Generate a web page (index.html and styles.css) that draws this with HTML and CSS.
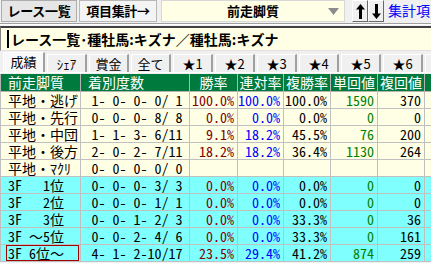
FILE: index.html
```html
<!DOCTYPE html>
<html lang="ja">
<head>
    <meta charset="UTF-8">
    <title>集計</title>
    <link rel="stylesheet" href="styles.css">
</head>
<body>
<div id="ventana">
    <!-- barra superior -->
    <div class="barra">
        <button class="btn">レース一覧</button>
        <button class="btn btn-activo">項目集計→</button>
        <div class="combo">
            <span>前走脚質</span>
            <svg class="triangulo" width="11" height="7" viewBox="0 0 11 7"><path d="M0 0H11L5.5 7Z" fill="#8c8c8c"/></svg>
        </div>
        <div class="flechas">
            <button class="flecha"><svg width="9" height="15" viewBox="0 0 9 15"><path d="M4.5 0L9 5.5H6V15H3V5.5H0Z" fill="#000"/></svg></button>
            <button class="flecha"><svg width="9" height="15" viewBox="0 0 9 15"><path d="M4.5 15L9 9.5H6V0H3V9.5H0Z" fill="#000"/></svg></button>
        </div>
        <span class="enlace">集計項目</span>
    </div>

    <div class="titulo">
        <span class="cursor"></span>
        <span>レース一覧･種牡馬:キズナ／種牡馬:キズナ</span>
    </div>

    <!-- pestañas -->
    <div class="pestanas">
        <div class="pestana activa">成績</div>
        <div class="pestana">ｼｪｱ</div>
        <div class="pestana">賞金</div>
        <div class="pestana">全て</div>
        <div class="pestana">★1</div>
        <div class="pestana">★2</div>
        <div class="pestana">★3</div>
        <div class="pestana">★4</div>
        <div class="pestana">★5</div>
        <div class="pestana">★6</div>
        <div class="pestana">★7</div>
    </div>

    <table class="tabla">
        <colgroup>
            <col style="width:80px"><col style="width:109px"><col style="width:48px"><col style="width:46px">
            <col style="width:47px"><col style="width:47px"><col style="width:47px"><col style="width:47px">
        </colgroup>
        <thead>
            <tr><th class="izq">前走脚質</th><th class="izq">着別度数</th><th>勝率</th><th>連対率</th><th>複勝率</th><th>単回値</th><th>複回値</th><th class="izq">単勝</th></tr>
        </thead>
        <tbody id="cuerpo"></tbody>
    </table>
</div>

<script>
    // Datos de la tabla
    const filas = [
        ['平地・逃げ', ' 1- 0- 0- 0/ 1', '100.0%', '100.0%', '100.0%', '1590', '370', 'p'],
        ['平地・先行', ' 0- 0- 0- 8/ 8', '0.0%', '0.0%', '0.0%', '0', '0', 'p'],
        ['平地・中団', ' 1- 1- 3- 6/11', '9.1%', '18.2%', '45.5%', '76', '200', 'p'],
        ['平地・後方', ' 2- 0- 2- 7/11', '18.2%', '18.2%', '36.4%', '1130', '264', 'p'],
        ['平地・ﾏｸﾘ', ' 0- 0- 0- 0/ 0', '', '', '', '', '', 'p'],
        ['3F   1位', ' 0- 0- 0- 3/ 3', '0.0%', '0.0%', '0.0%', '0', '0', 'c'],
        ['3F   2位', ' 0- 0- 0- 1/ 1', '0.0%', '0.0%', '0.0%', '0', '0', 'c'],
        ['3F   3位', ' 0- 0- 1- 2/ 3', '0.0%', '0.0%', '33.3%', '0', '36', 'c'],
        ['3F ～5位', ' 0- 0- 2- 4/ 6', '0.0%', '0.0%', '33.3%', '0', '161', 'c'],
        ['3F 6位～', ' 4- 1- 2-10/17', '23.5%', '29.4%', '41.2%', '874', '259', 'c']
    ];
    const cuerpo = document.getElementById('cuerpo');
    filas.forEach((f, i) => {
        const tr = document.createElement('tr');
        tr.className = f[7] === 'c' ? 'fila-celeste' : 'fila-amarilla';
        const nombre = i === filas.length - 1
            ? '<td class="nombre"><span class="foco">' + f[0] + '</span></td>'
            : '<td class="nombre"><span>' + f[0] + '</span></td>';
        tr.innerHTML = nombre +
            '<td class="conteo">' + f[1] + '</td>' +
            '<td class="num rojo">' + f[2] + '</td>' +
            '<td class="num azul">' + f[3] + '</td>' +
            '<td class="num">' + f[4] + '</td>' +
            '<td class="num verde">' + f[5] + '</td>' +
            '<td class="num">' + f[6] + '</td>' +
            '<td class="num"></td>';
        cuerpo.appendChild(tr);
    });
</script>
</body>
</html>
```

FILE: styles.css
```css
body {
    margin: 0;
    background-color: #f0f0f0;
    font-family: "Noto Sans CJK JP", sans-serif;
}
#ventana {
    width: 431px;
    height: 263px;
    overflow: hidden;
}
.barra {
    display: grid;
    grid-template-columns: 76px 78px 186px 37px 60px;
    column-gap: 2px;
    height: 23px;
    padding-left: 1px;
    border-bottom: 1px solid #a0a0a0;
    box-shadow: 0 1px 0 #fff;
}
.btn {
    height: 22px;
    padding: 0;
    margin: 0;
    font-family: "Noto Sans CJK JP", sans-serif;
    font-size: 13px;
    font-weight: bold;
    line-height: 20px;
    letter-spacing: -0.3px;
    color: #000;
    background-color: #e6e6e6;
    border: 1px solid #adadad;
    white-space: nowrap;
}
.btn-activo {
    background-color: #f4f4f4;
    border-color: #b8b8b8;
}
.combo {
    margin-left: 2px;
    height: 22px;
    box-sizing: border-box;
    background-color: #ffffe6;
    border: 1px solid #d8d8d8;
    position: relative;
    font-size: 13px;
    font-weight: bold;
    line-height: 20px;
    text-align: center;
}
.triangulo {
    position: absolute;
    right: 5px;
    top: 7px;
}
.flechas {
    display: flex;
    margin-left: 5px;
}
.flecha {
    width: 16px;
    height: 22px;
    padding: 0;
    margin: 0;
    background-color: #f0f0f0;
    border: 1px solid;
    border-color: #fff #696969 #696969 #fff;
    display: flex;
    align-items: center;
    justify-content: center;
}
.enlace {
    margin-left: 2px;
    color: #0000ff;
    font-size: 14px;
    white-space: nowrap;
    line-height: 21px;
}
.titulo {
    margin-top: 2px;
    height: 22px;
    background-color: #ffffe6;
    border-top: 2px solid #404040;
    border-left: 1px solid #808080;
    border-bottom: 1px solid #e0e0e0;
    display: flex;
    align-items: center;
    font-size: 14px;
    font-weight: bold;
    white-space: nowrap;
}
.cursor {
    width: 2px;
    height: 18px;
    background-color: #000;
    margin-left: 6px;
    margin-right: 2px;
}
.pestanas {
    display: flex;
    height: 20px;
    margin-top: 1px;
    padding-left: 3px;
    border-bottom: 1px solid #fff;
    align-items: flex-end;
}
.pestana {
    flex: none;
    width: 40px;
    height: 18px;
    box-sizing: border-box;
    border-left: 1px solid #fff;
    border-right: 2px solid #a0a0a0;
    border-top: 1px solid #fff;
    font-size: 13px;
    line-height: 18px;
    text-align: center;
    color: #000;
    background-color: #f0f0f0;
    margin-right: 2px;
}
.activa {
    height: 20px;
    width: 42px;
    background-color: #f8f8f8;
}
.tabla {
    margin-top: 1px;
    border-collapse: collapse;
    table-layout: fixed;
    width: 471px;
    font-family: "Noto Sans Mono CJK JP", "Liberation Mono", "Noto Sans CJK JP", monospace;
    font-size: 14px;
}
.tabla th {
    height: 17px;
    padding: 0;
    background-color: #007a3d;
    color: #fff;
    font-weight: normal;
    text-align: center;
    border: 1px solid #b4b4b4;
    border-top: none;
    line-height: 17px;
    white-space: nowrap;
    overflow: hidden;
}
.tabla th.izq {
    text-align: left;
    padding-left: 7px;
}
.tabla td {
    height: 16px;
    padding: 0 3px 0 0;
    border: 1px solid #c0c0c0;
    line-height: 16px;
    white-space: pre;
    overflow: hidden;
}
.fila-amarilla td {
    background-color: #ffffe6;
}
.fila-celeste td {
    background-color: #80ffff;
}
.tabla td.nombre {
    padding: 0;
}
.nombre span {
    display: block;
    margin-left: 5px;
    padding-left: 1px;
    border: 1px solid transparent;
    line-height: 14px;
}
.nombre span.foco {
    border-color: #a00000;
    margin-right: 1px;
}
.conteo {
    text-align: center;
}
.num {
    text-align: right;
}
.rojo {
    color: #800000;
}
.azul {
    color: #0000ff;
}
.verde {
    color: #008000;
}
```
